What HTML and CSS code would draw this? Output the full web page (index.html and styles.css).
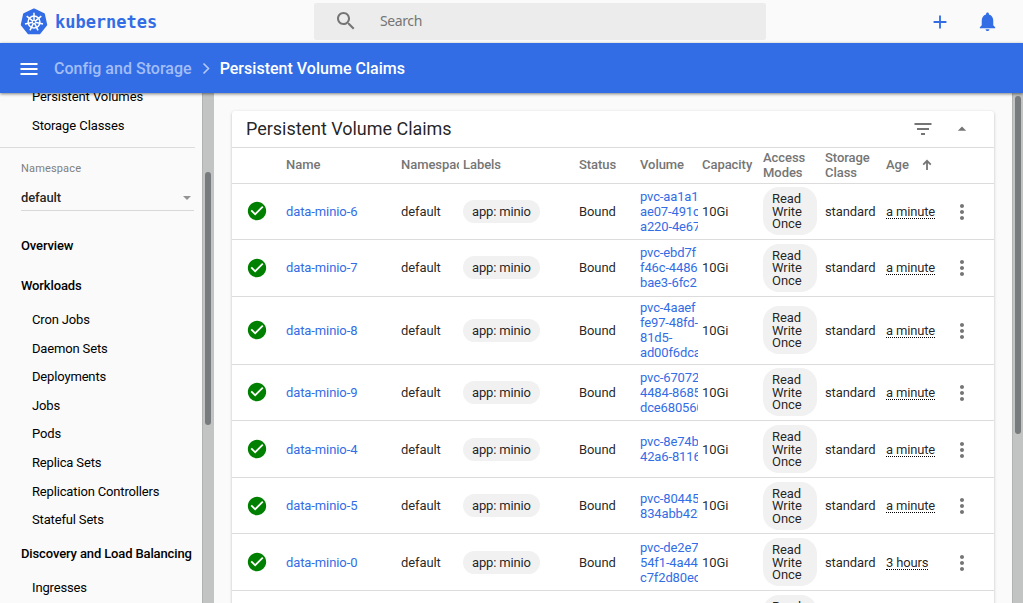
FILE: index.html
```html
<!DOCTYPE html>
<html lang="en">
<head>
<meta charset="utf-8">
<title>Persistent Volume Claims</title>
<link rel="stylesheet" href="styles.css">
</head>
<body>
<svg class="defs" width="0" height="0">
  <symbol id="check" viewBox="0 0 24 24"><path fill="green" d="M12 2C6.48 2 2 6.48 2 12s4.48 10 10 10 10-4.48 10-10S17.52 2 12 2zm-2 15l-5-5 1.41-1.41L10 14.17l7.59-7.59L19 8l-9 9z"/></symbol>
  <symbol id="more" viewBox="0 0 24 24"><path fill="#757575" d="M12 8c1.100 0 2-.9 2-2s-.9-2-2-2-2 .9-2 2 .9 2 2 2zm0 2c-1.100 0-2 .9-2 2s.9 2 2 2 2-.9 2-2-.9-2-2-2zm0 6c-1.100 0-2 .9-2 2s.9 2 2 2 2-.9 2-2-.9-2-2-2z"/></symbol>
</svg>
<div class="app">
  <header class="topbar">
    <a class="logo">
      <svg width="28" height="28" viewBox="-14 -14 28 28">
        <path class="hept" d="M0-12.500L9.900-7.800L12.200 2.800L5.400 11.300H-5.400L-12.200 2.800L-9.900-7.800Z"/>
        <g class="wheel">
          <circle r="5.900"/>
          <path d="M0-1V-9.300M.8-.6L7.300-5.800M1 .2L9 2.100M.4 .9L4 8.300M-.4 .9L-4 8.300M-1 .2L-9 2.100M-.8-.6L-7.300-5.800"/>
        </g>
      </svg>
      <span class="wordmark">kubernetes</span>
    </a>
    <div class="search">
      <svg width="24" height="24" viewBox="0 0 24 24"><path fill="#757575" d="M15.500 14h-.79l-.28-.27C15.410 12.590 16 11.110 16 9.500 16 5.910 13.090 3 9.500 3S3 5.910 3 9.500 5.910 16 9.500 16c1.610 0 3.090-.59 4.230-1.570l.27.28v.79l5 4.990L20.490 19l-4.990-5zm-6 0C7.010 14 5 11.990 5 9.500S7.010 5 9.500 5 14 7.010 14 9.500 11.990 14 9.500 14z"/></svg>
      <span>Search</span>
    </div>
    <div class="actions">
      <svg width="22" height="22" viewBox="0 0 24 24"><path d="M19 13h-6v6h-2v-6H5v-2h6V5h2v6h6v2z"/></svg>
      <svg width="23" height="23" viewBox="0 0 24 24"><path d="M12 22c1.100 0 2-.9 2-2h-4c0 1.100.89 2 2 2zm6-6v-5c0-3.070-1.640-5.640-4.500-6.320V4c0-.83-.67-1.500-1.500-1.500s-1.500.67-1.500 1.500v.68C7.630 5.360 6 7.920 6 11v5l-2 2v1h16v-1l-2-2z"/></svg>
    </div>
  </header>
  <div class="crumbs">
    <svg width="24" height="24" viewBox="0 0 24 24" fill="#fff"><path d="M3.500 19h17v-2h-17v2zm0-5h17v-2h-17v2zm0-7v2h17V7h-17z"/></svg>
    <span class="parent">Config and Storage</span>
    <svg class="sep" width="16" height="16" viewBox="0 0 16 16"><path d="M5.500 3.500l5 5-5 5" fill="none" stroke="#b4c9f7" stroke-width="1.600"/></svg>
    <span class="current">Persistent Volume Claims</span>
  </div>
  <div class="body">
    <nav class="sidebar">
      <div class="navlist">
        <div class="items storage">
          <a>Persistent Volumes</a><a>Storage Classes</a>
        </div>
        <div class="namespace">
          <label>Namespace</label>
          <div class="select"><b>default</b><i></i></div>
        </div>
        <h3 class="overview">Overview</h3>
        <h3>Workloads</h3>
        <div class="items workloads">
          <a>Cron Jobs</a><a>Daemon Sets</a><a>Deployments</a><a>Jobs</a><a>Pods</a><a>Replica Sets</a><a>Replication Controllers</a><a>Stateful Sets</a>
        </div>
        <h3>Discovery and Load Balancing</h3>
        <div class="items"><a>Ingresses</a></div>
      </div>
      <div class="scroll side"><i></i></div>
    </nav>
    <main class="content">
      <section class="card">
        <div class="card-head">
          <h1>Persistent Volume Claims</h1>
          <svg width="24" height="24" viewBox="0 0 24 24"><path fill="#757575" d="M10 18h4v-2h-4v2zM3.500 6v2h17V6h-17zM6 13h12v-2H6v2z"/></svg>
          <svg width="20" height="20" viewBox="0 0 24 24"><path fill="#757575" d="M7 14l5-5 5 5z"/></svg>
        </div>
        <div class="row head">
          <span></span><span>Name</span><span class="clip">Namespace</span><span>Labels</span><span>Status</span><span>Volume</span><span>Capacity</span><span>Access Modes</span><span>Storage Class</span><span class="age">Age <svg width="14" height="14" viewBox="0 0 14 14"><path d="M7 12V3M3.200 6.600L7 2.800l3.800 3.800" fill="none" stroke="#757575" stroke-width="1.800"/></svg></span><span></span>
        </div>
        <div class="rows" id="rows"></div>
      </section>
      <div class="scroll main"><i></i></div>
    </main>
  </div>
</div>
<script src="app.js"></script>
</body>
</html>
```
FILE: styles.css
```css
* { box-sizing: border-box; }
body {
  margin: 0;
  background: #fafafa;
  color: rgba(0, 0, 0, .87);
  font: 13px/15px Roboto, sans-serif;
  letter-spacing: -.1px;
}
.defs { position: absolute; }
.app { display: flex; flex-direction: column; height: 603px; overflow: hidden; }

.topbar { display: flex; height: 43px; flex: none; padding-left: 20px; }
.logo { display: flex; align-items: center; width: 294px; }
.wordmark {
  margin-left: 7px;
  color: #326de6;
  font: bold 17px/20px "DejaVu Sans Mono", monospace;
  letter-spacing: -.02px;
}
.hept { fill: #326de6; stroke: #326de6; stroke-width: 2; stroke-linejoin: round; }
.wheel { fill: none; stroke: #fff; stroke-width: 1.500; }
.search {
  display: flex;
  align-items: center;
  width: 452px;
  height: 37px;
  margin-top: 3px;
  padding: 0 0 1px 20px;
  border-radius: 2px;
  background: #ececec;
  color: #757575;
  font: 14px/18px "Noto Sans", sans-serif;
  letter-spacing: -.4px;
}
.search span { margin-left: 22px; }
.actions { display: flex; align-items: center; gap: 25px; margin-left: 163px; fill: #326de6; }

.crumbs {
  position: relative;
  z-index: 2;
  display: flex;
  flex: none;
  align-items: center;
  height: 50px;
  padding-left: 17px;
  background: #326de6;
  box-shadow: 0 1px 3px rgba(0, 0, 0, .5);
  font-size: 16px;
  font-weight: 500;
  letter-spacing: .02px;
}
.parent { margin-left: 13px; color: #a3bdf5; }
.sep { margin: 0 6px; }
.current { color: #fff; }

.body { display: flex; flex: 1; min-height: 0; }
.sidebar { display: flex; width: 214px; flex: none; overflow: hidden; color: #000; }
.navlist { width: 202px; flex: none; }
.items { display: flex; flex-direction: column; letter-spacing: -.16px; }
.items a { height: 28.600px; padding-left: 32px; line-height: 28.600px; }
.storage { height: 54px; margin-top: -10px; margin-bottom: -1px; letter-spacing: -.08px; }
.storage + .namespace { margin-top: 11px; }
.namespace { width: 195px; padding: 13px 1px 0 21px; border-top: 1px solid #dcdcdc; }
.namespace label { display: block; color: #808080; font-size: 11px; letter-spacing: .16px; }
.select {
  display: flex;
  align-items: center;
  justify-content: space-between;
  height: 35px;
  padding: 9px 3px 0 0;
  border-bottom: 1px solid #d8d8d8;
}
.select b { color: rgba(0, 0, 0, .87); font-weight: 500; }
.select i { border: 4px solid transparent; border-top-color: #949494; border-bottom: 0; }
h3 { height: 40px; margin: 0; padding-left: 21px; font: 500 13px/40px Roboto, sans-serif; letter-spacing: -.13px; white-space: nowrap; }
.overview { margin-top: 15px; }
.workloads { height: 228px; }
.scroll { width: 12px; flex: none; background: #c1c4c2; border-left: 1px solid #b0b3b1; }
.scroll i { display: block; width: 6px; margin-left: 2px; border-radius: 3px; background: #787b7d; }
.side i { height: 253px; margin-top: 79px; }
.main i { height: 338px; margin-top: 3px; }

.content { display: flex; flex: 1; justify-content: space-between; padding-left: 18px; }
.main { width: 11px; }
.card {
  width: 762px;
  height: 600px;
  margin-top: 18px;
  border-radius: 3px;
  background: #fff;
  box-shadow: 0 1px 3px rgba(0, 0, 0, .25);
}
.card-head { display: flex; align-items: center; height: 36px; padding: 0 22px 0 14px; }
.card-head h1 { flex: 1; margin: 0; font: 400 18px/36px Roboto, sans-serif; letter-spacing: -.03px; }
.card-head svg + svg { margin-left: 17px; }
.row {
  display: grid;
  grid-template-columns: 40px 115px 62px 116px 61px 62px 61px 62px 61px 64px 24px;
  align-items: center;
  height: 56px;
  padding: 0 0 1px 14px;
  border-bottom: 1px solid #dcdcdc;
}
.head { height: 37px; padding-bottom: 2px; border-top: 1px solid #dcdcdc; color: #757575; font-weight: 500; letter-spacing: -.05px; }
.clip { width: 58px; overflow: hidden; }
.age { display: flex; align-items: center; gap: 11px; }
.rows .row:nth-child(2), .rows .row:nth-child(5), .rows .row:nth-child(7) { height: 57px; }
.rows .row:nth-child(3) { height: 68px; }
.rows .row:nth-child(n+5) { padding-bottom: 0; }
.link { color: #326de6; }
.volume { width: 58px; overflow: hidden; white-space: pre; letter-spacing: -.14px; }
.ok { display: block; }
.chip { display: inline-block; padding: 4px 9px; border-radius: 12px; background: #f1f1f1; letter-spacing: -.15px; }
.mode { width: 54px; height: 48px; padding: 6px 9px 4px; border-radius: 16px; line-height: 12.600px; letter-spacing: -.05px; }
.time { justify-self: start; margin-top: 1px; border-bottom: 1px dotted #000; line-height: 13px; letter-spacing: -.16px; }
.menu { margin-top: 1px; }
```
FILE: app.js
```js
const claims = [
  ["data-minio-6", "pvc-aa1a1\nae07-491c\na220-4e67", "a minute"],
  ["data-minio-7", "pvc-ebd7f\nf46c-4486\nbae3-6fc2", "a minute"],
  ["data-minio-8", "pvc-4aaef\nfe97-48fd-\n81d5-\nad00f6dca", "a minute"],
  ["data-minio-9", "pvc-67072\n4484-8685\ndce680560", "a minute"],
  ["data-minio-4", "pvc-8e74b\n42a6-8116", "a minute"],
  ["data-minio-5", "pvc-80445\n834abb423", "a minute"],
  ["data-minio-0", "pvc-de2e7\n54f1-4a44\nc7f2d80ec", "3 hours"],
  ["data-minio-1", "pvc-19c3a", "3 hours"]
];
document.getElementById("rows").innerHTML = claims.map(([name, volume, age]) => `
  <div class="row">
    <svg class="ok" width="22" height="22"><use href="#check"/></svg>
    <span class="link">${name}</span>
    <span>default</span>
    <span><span class="chip">app: minio</span></span>
    <span>Bound</span>
    <span class="link volume">${volume}</span>
    <span>10Gi</span>
    <span class="chip mode">Read Write Once</span>
    <span>standard</span>
    <span class="time">${age}</span>
    <svg class="menu" width="24" height="24"><use href="#more"/></svg>
  </div>`).join("");
```
